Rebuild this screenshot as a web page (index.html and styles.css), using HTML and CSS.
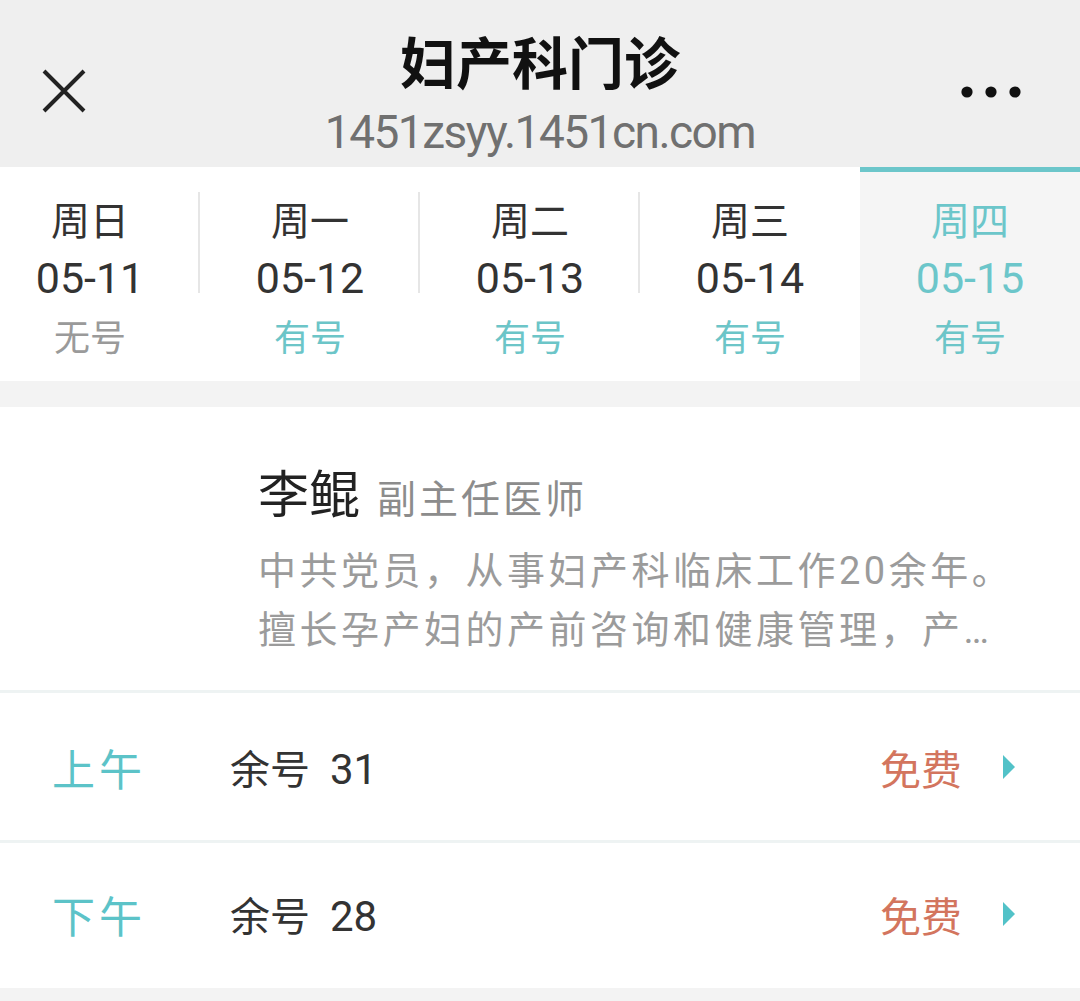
FILE: index.html
```html
<!DOCTYPE html>
<html lang="zh-CN">
<head>
<meta charset="utf-8">
<title>妇产科门诊</title>
<link rel="stylesheet" href="styles.css">
</head>
<body>
<div class="page">
  <header class="topbar">
    <div class="side side-left">
      <svg class="icon-close" width="46" height="44" viewBox="0 0 46 44" aria-hidden="true">
        <path d="M3 2 L43 42 M43 2 L3 42" stroke="#222" stroke-width="4" fill="none" stroke-linecap="butt"/>
      </svg>
    </div>
    <div class="titles">
      <div class="title">妇产科门诊</div>
      <div class="url">1451zsyy.1451cn.com</div>
    </div>
    <div class="side side-right">
      <svg class="icon-more" width="62" height="14" viewBox="0 0 62 14" aria-hidden="true">
        <circle cx="7" cy="7" r="5.6" fill="#111"/>
        <circle cx="31" cy="7" r="5.6" fill="#111"/>
        <circle cx="55" cy="7" r="5.6" fill="#111"/>
      </svg>
    </div>
  </header>

  <nav class="days">
    <div class="days-track">
      <div class="day sep">
        <div class="wd">周日</div>
        <div class="date">05-11</div>
        <div class="status none">无号</div>
      </div>
      <div class="day sep">
        <div class="wd">周一</div>
        <div class="date">05-12</div>
        <div class="status has">有号</div>
      </div>
      <div class="day sep">
        <div class="wd">周二</div>
        <div class="date">05-13</div>
        <div class="status has">有号</div>
      </div>
      <div class="day">
        <div class="wd">周三</div>
        <div class="date">05-14</div>
        <div class="status has">有号</div>
      </div>
      <div class="day active">
        <div class="wd">周四</div>
        <div class="date">05-15</div>
        <div class="status has">有号</div>
      </div>
    </div>
  </nav>

  <section class="doctor">
    <div class="doc-head">
      <span class="doc-name">李鲲</span>
      <span class="doc-title">副主任医师</span>
    </div>
    <p class="doc-desc">中共党员，从事妇产科临床工作20余年。擅长孕产妇的产前咨询和健康管理，产…</p>
  </section>

  <section class="slots">
    <div class="slot">
      <span class="period">上午</span>
      <span class="remain">余号<span class="num">31</span></span>
      <span class="fee">免费</span>
      <span class="arrow"></span>
    </div>
    <div class="slot">
      <span class="period">下午</span>
      <span class="remain">余号<span class="num">28</span></span>
      <span class="fee">免费</span>
      <span class="arrow"></span>
    </div>
  </section>
</div>
</body>
</html>
```

FILE: styles.css
```css
* {
  box-sizing: border-box;
  margin: 0;
  padding: 0;
}

html, body {
  background: #f3f3f3;
}

body {
  font-family: Roboto, "Noto Sans CJK SC", sans-serif;
  color: #333;
  width: 1080px;
  overflow: hidden;
}

.page {
  width: 1080px;
}

/* ---------- top bar ---------- */
.topbar {
  height: 167px;
  background: #efefef;
  display: grid;
  grid-template-columns: 1fr auto 1fr;
}

.side {
  display: flex;
  align-items: flex-start;
}

.side-left {
  padding: 69px 0 0 41px;
}

.side-right {
  justify-content: flex-end;
  padding: 85px 58px 0 0;
}

.titles {
  display: flex;
  flex-direction: column;
  align-items: center;
  padding-top: 26px;
}

.title {
  font-family: "Noto Sans CJK SC", sans-serif;
  font-size: 56px;
  line-height: 68px;
  font-weight: 700;
  color: #111;
}

.url {
  margin-top: 16px;
  font-size: 46px;
  line-height: 44px;
  letter-spacing: -1.5px;
  color: #707070;
}

/* ---------- day tabs ---------- */
.days {
  height: 214px;
  background: #fff;
  overflow: hidden;
}

.days-track {
  display: flex;
  margin-left: -20px;
  height: 100%;
}

.day {
  width: 220px;
  flex: 0 0 220px;
  display: flex;
  flex-direction: column;
  align-items: center;
  padding-top: 23px;
  text-align: center;
}

.day.sep {
  background-image: linear-gradient(#e6e6e6, #e6e6e6);
  background-repeat: no-repeat;
  background-size: 2px 101px;
  background-position: right 25px;
}

.day.active {
  background: #f5f5f5;
  border-top: 5px solid #6cc6ca;
  padding-top: 18px;
  color: #6cc6ca;
}

.wd {
  font-family: "Noto Sans CJK SC", sans-serif;
  font-size: 39px;
  line-height: 56px;
}

.date {
  margin-top: 4px;
  font-size: 43px;
  line-height: 56px;
}

.status {
  font-family: "Noto Sans CJK SC", sans-serif;
  font-size: 36px;
  line-height: 56px;
  margin-top: 1px;
}

.status.none {
  color: #9a9a9a;
}

.status.has {
  color: #6cc5c8;
}

/* ---------- doctor card ---------- */
.doctor {
  margin-top: 26px;
  background: #fff;
  padding: 54px 40px 30px 258px;
  border-bottom: 3px solid #eef3f3;
}

.doc-head {
  display: flex;
  align-items: baseline;
  line-height: 60px;
}

.doc-name {
  font-family: "Noto Sans CJK SC", sans-serif;
  font-size: 51px;
  color: #222;
}

.doc-title {
  font-family: "Noto Sans CJK SC", sans-serif;
  font-size: 39px;
  color: #8c8c8c;
  margin-left: 17px;
  letter-spacing: 3px;
}

.doc-desc {
  margin-top: 16px;
  width: 780px;
  font-size: 38px;
  line-height: 59px;
  letter-spacing: 3.5px;
  color: #9b9b9b;
}

/* ---------- slots ---------- */
.slots {
  background: #fff;
}

.slot {
  height: 147px;
  display: flex;
  align-items: center;
  padding: 0 65px 0 52px;
}

.slot + .slot {
  border-top: 3px solid #eef3f3;
  height: 148px;
  padding-bottom: 3px;
}

.period {
  font-family: "Noto Sans CJK SC", sans-serif;
  font-size: 43px;
  letter-spacing: 4px;
  color: #5cc3c8;
  width: 178px;
}

.remain {
  font-family: "Noto Sans CJK SC", sans-serif;
  font-size: 40px;
  color: #333;
  flex: 1;
}

.num {
  font-family: Roboto, sans-serif;
  font-size: 42px;
  margin-left: 20px;
}

.fee {
  font-family: "Noto Sans CJK SC", sans-serif;
  font-size: 41px;
  color: #d3755e;
  margin-right: 41px;
}

.arrow {
  width: 0;
  height: 0;
  border-top: 12px solid transparent;
  border-bottom: 12px solid transparent;
  border-left: 12px solid #52c2c8;
}
```
